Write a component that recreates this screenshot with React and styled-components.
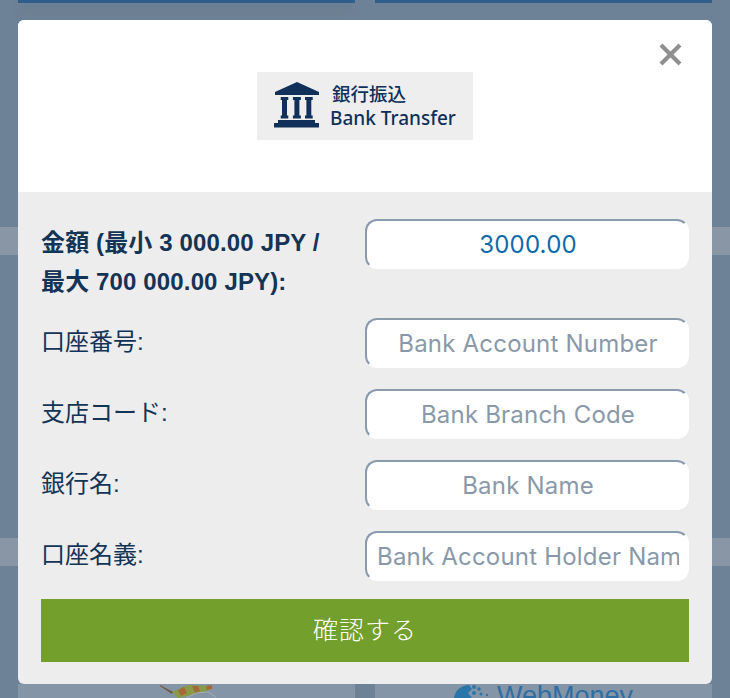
import React from "react";
import styled, { createGlobalStyle } from "styled-components";

const GlobalStyle = createGlobalStyle`
  html, body {
    margin: 0;
    padding: 0;
    height: 100%;
    overflow: hidden;
  }
  body {
    font-family: "Liberation Sans", "Noto Sans CJK JP", sans-serif;
    background: #6e8297;
  }
`;

const Page = styled.div`
  position: relative;
  width: 730px;
  height: 698px;
  overflow: hidden;
  background: #6e8297;
`;

const TileRow = styled.div`
  display: grid;
  grid-template-columns: 337px 337px;
  gap: 20px;
  padding: 0 18px;
  height: ${(p) => p.$height}px;
  margin-top: ${(p) => p.$top || 0}px;
`;

const Tile = styled.div`
  background: ${(p) => p.$bg || "transparent"};
  border-bottom: ${(p) => (p.$line ? "3px solid #2f5d8c" : "none")};
  box-shadow: ${(p) => (p.$shadow ? "0 8px 12px rgba(70, 70, 50, 0.14)" : "none")};
  display: flex;
  justify-content: center;
  gap: 7px;
  padding-left: ${(p) => p.$shift || 0}px;
  overflow: hidden;
`;

const Band = styled.div`
  height: 28px;
  margin-top: ${(p) => p.$top}px;
  background: #8996a6;
`;

const WebMoney = styled.span`
  display: block;
  margin-top: -3px;
  font-size: 27px;
  line-height: 30px;
  color: #2f6ea3;
`;

const Modal = styled.div`
  position: absolute;
  left: 18px;
  top: 20px;
  width: 694px;
  height: 664px;
  border-radius: 6px;
  overflow: hidden;
  background: #ededed;
`;

const Header = styled.header`
  position: relative;
  height: 172px;
  background: #fff;
  display: flex;
  justify-content: center;
  padding-top: 52px;
  box-sizing: border-box;
`;

const Close = styled.button`
  position: absolute;
  top: 22px;
  right: 29px;
  width: 25px;
  height: 25px;
  padding: 0;
  border: none;
  background: none;
  color: #8f8f8f;
`;

const LogoBox = styled.div`
  width: 216px;
  height: 68px;
  background: #eee;
  display: flex;
  align-items: center;
  gap: 11px;
  padding-left: 17px;
  box-sizing: border-box;
  color: #10305a;

  svg {
    flex: none;
    margin-top: -3px;
  }
`;

const LogoText = styled.div`
  display: flex;
  flex-direction: column;
  margin-left: -1px;
  font-family: "Noto Sans", "Noto Sans CJK JP", sans-serif;
  font-size: 19px;
  line-height: 25px;
  font-weight: 500;
  white-space: nowrap;
`;

const LogoLine = styled.span`
  padding-left: ${(p) => p.$indent || 0}px;
  font-size: ${(p) => p.$size || 19}px;
`;

const Form = styled.form`
  padding: 27px 23px 0;
`;

const Row = styled.div`
  display: flex;
  align-items: flex-start;
  justify-content: space-between;
  margin-bottom: ${(p) => (p.$tight ? 17 : 21)}px;
`;

const Label = styled.label`
  width: 310px;
  color: #143456;
  font-size: 24px;
  line-height: ${(p) => (p.$strong ? "39px" : "48px")};
  font-weight: ${(p) => (p.$strong ? 700 : 400)};
  letter-spacing: ${(p) => (p.$strong ? "0.14px" : "0")};
  padding-top: ${(p) => (p.$strong ? 4 : 0)}px;
`;

const Input = styled.input`
  width: 324px;
  height: 50px;
  box-sizing: border-box;
  padding: 0 8px 0 10px;
  border-style: solid;
  border-width: 2px;
  border-color: #8a9bae #fff #fff #8a9bae;
  border-radius: 12px;
  background: #fff;
  outline: none;
  text-align: center;
  font-family: "Inter", sans-serif;
  font-size: 24px;
  letter-spacing: 0.2px;
  color: #0f6aab;

  &::placeholder {
    color: #8a99a9;
    opacity: 1;
  }
`;

const Submit = styled.button`
  display: block;
  width: 100%;
  height: 63px;
  margin-top: -3px;
  padding: 0 0 6px;
  border: none;
  background: #739f2d;
  color: #fff;
  font-family: "Noto Sans CJK JP", sans-serif;
  font-size: 25px;
  font-weight: 300;
  letter-spacing: 1px;
`;

const fields = [
  { label: "口座番号:", placeholder: "Bank Account Number" },
  { label: "支店コード:", placeholder: "Bank Branch Code" },
  { label: "銀行名:", placeholder: "Bank Name" },
  { label: "口座名義:", placeholder: "Bank Account Holder Name" },
];

const BankIcon = () => (
  <svg width="46" height="46" viewBox="0 0 46 46" fill="currentColor">
    <path d="M23 0 L45 10 V13 H1 V10 Z" />
    <path d="M6.7 15 H14.3 V18 H13 V33.5 H14.3 V36.5 H6.7 V33.5 H8 V18 H6.7 Z" />
    <path d="M18.9 15 H26.9 V18 H25.4 V33.5 H26.9 V36.5 H18.9 V33.5 H20.4 V18 H18.9 Z" />
    <path d="M31 15 H38.7 V18 H37.3 V33.5 H38.7 V36.5 H31 V33.5 H32.4 V18 H31 Z" />
    <path d="M4 38 H41 V41 H45 V45.5 H0 V41 H4 Z" />
  </svg>
);

const CloseIcon = () => (
  <svg width="25" height="25" viewBox="0 0 25 25" fill="none" stroke="currentColor" strokeWidth="4.2">
    <path d="M3 3 L22 22 M22 3 L3 22" />
  </svg>
);

const GeckoArt = () => (
  <svg width="60" height="14" viewBox="0 0 60 14">
    <path d="M0 1 L13 8 L12 10 L0 2 Z" fill="#6f5a3c" />
    <path d="M12 8 L28 1 L52 2 L50 6 L36 10 L18 14 Z" fill="#8a9a48" />
    <path d="M18 6 L24 3 L27 9 L21 12 Z M32 2 L38 2 L40 7 L35 9 Z M46 2 L52 1 L52 5 L47 6 Z" fill="#a5683a" />
    <path d="M26 14 L36 9 L48 8 L56 13" fill="none" stroke="#a4adb8" strokeWidth="1" />
  </svg>
);

const GlobeArt = () => (
  <svg width="36" height="14" viewBox="0 0 36 14">
    <path d="M0 14 C1 6 8 1 15 1 L18 5 L14 9 L18 14 Z" fill="#2a76a8" />
    <g fill="#2a76a8">
      <circle cx="20" cy="3" r="2" />
      <circle cx="25" cy="5" r="1.8" />
      <circle cx="20" cy="9" r="2" />
      <circle cx="27" cy="10" r="1.5" />
      <circle cx="33" cy="11" r="1.2" />
    </g>
  </svg>
);

const App = () => (
  <Page>
    <GlobalStyle />
    <TileRow $height={3}>
      <Tile $line $shadow />
      <Tile $line />
    </TileRow>
    <Band $top={224} />
    <Band $top={283} />
    <TileRow $height={14} $top={118}>
      <Tile $bg="#8595a8" $shift={6}>
        <GeckoArt />
      </Tile>
      <Tile $bg="#8595a8">
        <GlobeArt />
        <WebMoney>WebMoney</WebMoney>
      </Tile>
    </TileRow>
    <Modal>
      <Header>
        <Close type="button" aria-label="close">
          <CloseIcon />
        </Close>
        <LogoBox>
          <BankIcon />
          <LogoText>
            <LogoLine $indent={2} $size={18.5}>銀行振込</LogoLine>
            <LogoLine>Bank Transfer</LogoLine>
          </LogoText>
        </LogoBox>
      </Header>
      <Form>
        <Row $tight>
          <Label $strong>
            金額 (最小 3 000.00 JPY /
            <br />
            最大 700 000.00 JPY):
          </Label>
          <Input defaultValue="3000.00" />
        </Row>
        {fields.map((field) => (
          <Row key={field.label}>
            <Label>{field.label}</Label>
            <Input placeholder={field.placeholder} />
          </Row>
        ))}
        <Submit type="button">確認する</Submit>
      </Form>
    </Modal>
  </Page>
);

export default App;
